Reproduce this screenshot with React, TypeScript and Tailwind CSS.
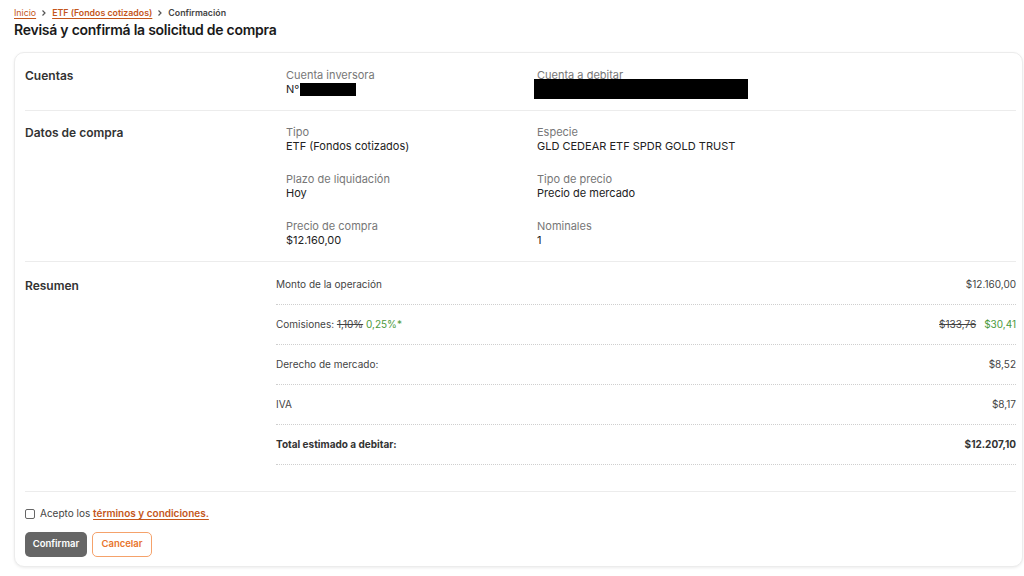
import React from "react";

const font = { fontFamily: "Inter, 'Noto Sans', sans-serif" };

function Field({ label, value, children }: { label: string; value?: string; children?: React.ReactNode }) {
  return (
    <div className="flex flex-col">
      <span className="text-[11px] leading-[14px] text-[#777777]">{label}</span>
      {children ?? <span className="text-[11px] leading-[14px] text-[#222222]">{value}</span>}
    </div>
  );
}

function Row({ label, children, bold }: { label: React.ReactNode; children: React.ReactNode; bold?: boolean }) {
  return (
    <div
      className={`flex h-[40px] items-center justify-between border-b border-dotted border-[#cfcfcf] text-[10px] ${
        bold ? "font-bold text-[#333333]" : "text-[#444444]"
      }`}
    >
      <div>{label}</div>
      <div>{children}</div>
    </div>
  );
}

function Chevron() {
  return (
    <svg width="8" height="8" viewBox="0 0 8 8">
      <path d="M2.5 1.5 L5 4 L2.5 6.5" fill="none" stroke="#555" strokeWidth="1.2" />
    </svg>
  );
}

export default function App() {
  return (
    <div className="min-h-[576px] bg-white pt-[7px]" style={font}>
      <div className="px-[14px]">
        <div className="flex items-center gap-[4px] text-[8.8px] leading-[12px]">
          <a className="text-[#c4561b] underline underline-offset-2">Inicio</a>
          <Chevron />
          <a className="font-semibold text-[#c4561b] underline underline-offset-2">ETF (Fondos cotizados)</a>
          <Chevron />
          <span className="font-semibold text-[#444]">Confirmación</span>
        </div>
        <h1 className="mt-[1px] text-[14px] leading-[20px] font-semibold tracking-[-0.25px] text-[#1a1a1a]">
          Revisá y confirmá la solicitud de compra
        </h1>
      </div>

      <div className="ml-[14px] mr-[1px] mt-[12px] rounded-[10px] border border-[#ececec] bg-white pl-[10px] pr-[6px] shadow-[0_1px_3px_rgba(0,0,0,0.08)]">
        {/* Cuentas */}
        <div className="flex border-b border-[#ececec] pt-[15px] pb-[14px]">
          <div className="w-[251px] text-[12px] leading-[16px] font-semibold text-[#333]">Cuentas</div>
          <div className="grid flex-1 grid-cols-[251px_1fr] pl-[10px]">
            <Field label="Cuenta inversora">
              <span className="flex items-center text-[11px] leading-[14px] text-[#222]">
                N°<span className="ml-[1px] inline-block h-[13px] w-[56px] bg-black" />
              </span>
            </Field>
            <div className="relative">
              <span className="block text-[11px] leading-[14px] text-[#777]">Cuenta a debitar</span>
              <span className="absolute left-[-3px] top-[11px] block h-[20px] w-[214px] bg-black" />
            </div>
          </div>
        </div>

        {/* Datos de compra */}
        <div className="flex border-b border-[#ececec] pt-[14px] pb-[14px]">
          <div className="w-[251px] text-[12px] leading-[16px] font-semibold text-[#333]">Datos de compra</div>
          <div className="grid flex-1 grid-cols-[251px_1fr] gap-y-[19px] pl-[10px]">
            <Field label="Tipo" value="ETF (Fondos cotizados)" />
            <Field label="Especie" value="GLD CEDEAR ETF SPDR GOLD TRUST" />
            <Field label="Plazo de liquidación" value="Hoy" />
            <Field label="Tipo de precio" value="Precio de mercado" />
            <Field label="Precio de compra" value="$12.160,00" />
            <Field label="Nominales" value="1" />
          </div>
        </div>

        {/* Resumen */}
        <div className="flex border-b border-[#ececec] pt-[3px] pb-[26px]">
          <div className="w-[251px] pt-[13px] text-[12px] leading-[16px] font-semibold text-[#333]">Resumen</div>
          <div className="flex-1">
            <Row label="Monto de la operación">$12.160,00</Row>
            <Row
              label={
                <span>
                  Comisiones: <span className="line-through">1,10%</span>{" "}
                  <span className="text-[#4c9a3c]">0,25%*</span>
                </span>
              }
            >
              <span className="line-through">$133,76</span>
              <span className="ml-[8px] text-[#4c9a3c]">$30,41</span>
            </Row>
            <Row label="Derecho de mercado:">$8,52</Row>
            <Row label="IVA">$8,17</Row>
            <Row label="Total estimado a debitar:" bold>
              $12.207,10
            </Row>
          </div>
        </div>

        {/* Terms */}
        <div className="pt-[14px] pb-[9px]">
          <label className="flex items-center gap-[5px] text-[10px] text-[#444]">
            <span className="inline-block h-[10px] w-[10px] rounded-[2px] border border-[#666] bg-white" />
            <span>
              Acepto los{" "}
              <a className="font-semibold text-[#c4561b] underline underline-offset-2">términos y condiciones.</a>
            </span>
          </label>
          <div className="mt-[11px] flex gap-[5px]">
            <button className="h-[25px] w-[62px] rounded-[5px] bg-[#666666] text-[9.5px] font-semibold text-white">
              Confirmar
            </button>
            <button className="h-[25px] w-[60px] rounded-[5px] border border-[#f5a26b] bg-white text-[9.5px] font-semibold text-[#e8742b]">
              Cancelar
            </button>
          </div>
        </div>
      </div>
    </div>
  );
}
